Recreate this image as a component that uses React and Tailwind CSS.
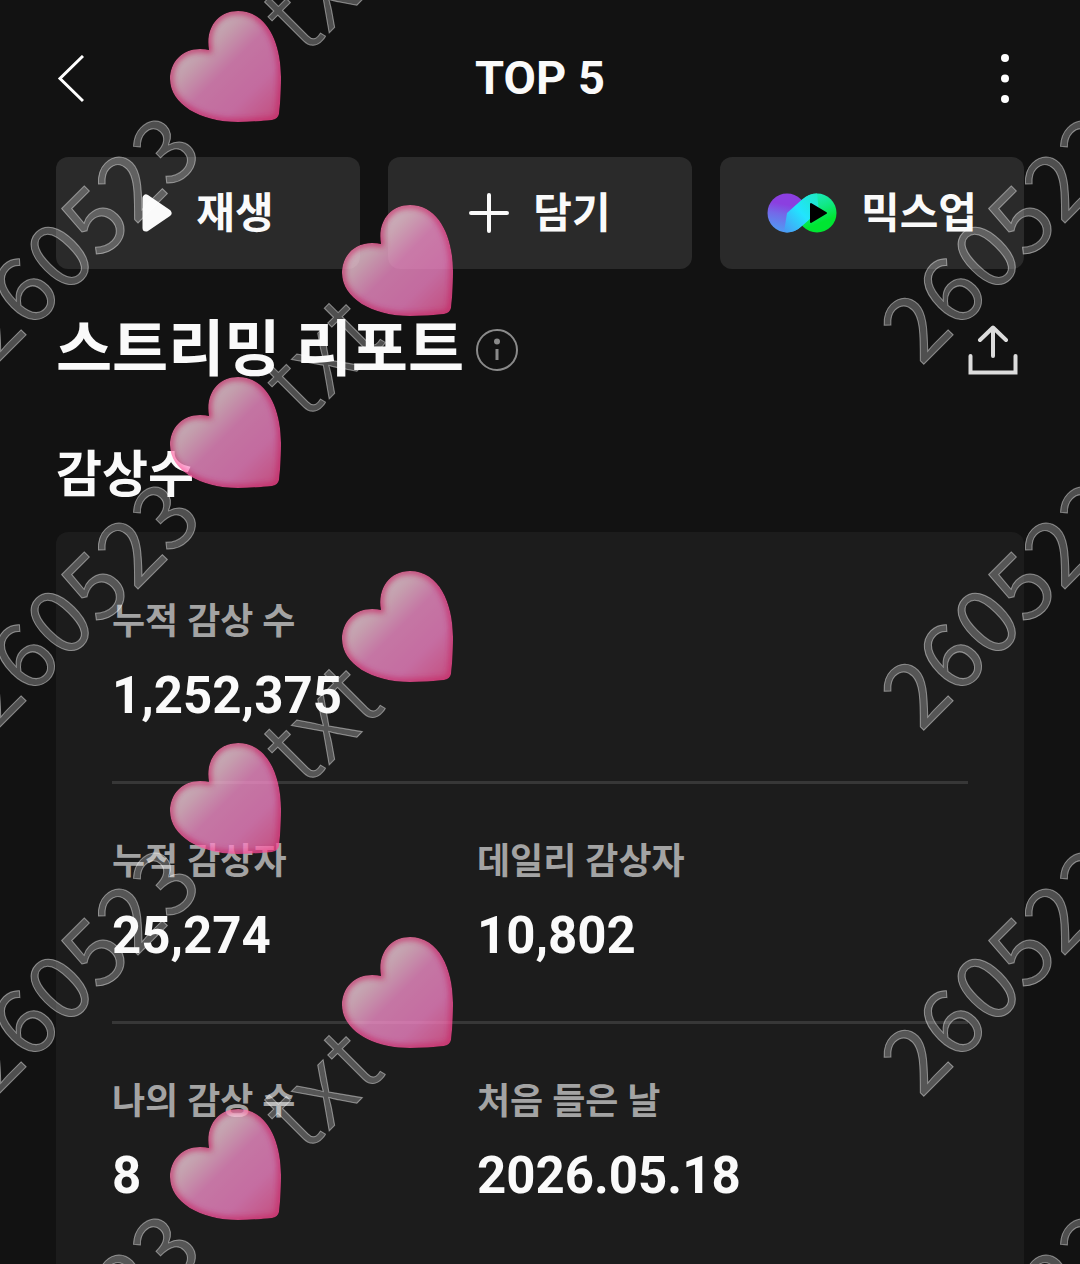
const stats = [
  [{ label: "누적 감상 수", value: "1,252,375" }],
  [
    { label: "누적 감상자", value: "25,274" },
    { label: "데일리 감상자", value: "10,802" },
  ],
  [
    { label: "나의 감상 수", value: "8" },
    { label: "처음 들은 날", value: "2026.05.18" },
  ],
];

const markRows = [0, 1, 2, 3];
const ROW_STEP = 366;

function BackIcon() {
  return (
    <svg width="28" height="48" viewBox="0 0 28 48" fill="none" aria-hidden="true">
      <path d="M27 1 4 23.500l23 22.500" stroke="#fff" strokeWidth="3" />
    </svg>
  );
}

function MoreIcon() {
  return (
    <svg width="8" height="50" viewBox="0 0 8 50" fill="#fff" aria-hidden="true">
      <circle cx="4" cy="4" r="4" />
      <circle cx="4" cy="24.500" r="4" />
      <circle cx="4" cy="45" r="4" />
    </svg>
  );
}

function PlayIcon() {
  return (
    <svg width="30" height="38" viewBox="0 0 30 38" aria-hidden="true">
      <path
        d="M4 4v30L26 19Z"
        fill="#fafafa"
        stroke="#fafafa"
        strokeWidth="7"
        strokeLinejoin="round"
      />
    </svg>
  );
}

function PlusIcon() {
  return (
    <svg width="40" height="40" viewBox="0 0 40 40" aria-hidden="true">
      <path d="M20 2v36M2 20h36" stroke="#fafafa" strokeWidth="4" strokeLinecap="round" />
    </svg>
  );
}

function MixIcon() {
  return (
    <svg width="70" height="40" viewBox="0 0 70 40" aria-hidden="true">
      <defs>
        <linearGradient id="mixLeft" x1="0.6" y1="0" x2="0.4" y2="1">
          <stop offset="0.3" stopColor="#8b3fe0" />
          <stop offset="0.55" stopColor="#7468e8" />
          <stop offset="1" stopColor="#4f9cf4" />
        </linearGradient>
        <linearGradient id="mixRight" x1="0.3" y1="0" x2="0.7" y2="1">
          <stop offset="0" stopColor="#1de9c6" />
          <stop offset="0.4" stopColor="#10e884" />
          <stop offset="0.75" stopColor="#00e632" />
        </linearGradient>
        <linearGradient id="mixBand" x1="0" y1="1" x2="1" y2="0">
          <stop offset="0" stopColor="#4b97f4" />
          <stop offset="0.5" stopColor="#22e4ff" />
          <stop offset="1" stopColor="#1de9c0" />
        </linearGradient>
      </defs>
      <circle cx="20" cy="20" r="19.5" fill="url(#mixLeft)" />
      <circle cx="50" cy="20" r="19.5" fill="url(#mixRight)" />
      <path
        d="M20 20 35 6.500Q41.500 .5 50 .5L52 18 35 33Q28 39.500 20 39.500L17 39Z"
        fill="url(#mixBand)"
      />
      <path d="M44 11v18l15-9Z" fill="#000" stroke="#000" strokeWidth="2" strokeLinejoin="round" />
    </svg>
  );
}

function InfoIcon() {
  return (
    <svg width="42" height="42" viewBox="0 0 42 42" fill="none" aria-hidden="true">
      <circle cx="21" cy="21" r="20" stroke="#8a8a8a" strokeWidth="2" />
      <circle cx="21" cy="12.500" r="3" fill="#8a8a8a" />
      <path d="M21 20v11" stroke="#8a8a8a" strokeWidth="3" />
    </svg>
  );
}

function ShareIcon() {
  return (
    <svg width="50" height="50" viewBox="0 0 50 50" fill="none" aria-hidden="true">
      <g stroke="#dcdcdc" strokeLinecap="round">
        <path d="M25 31V3M12 15 25 2.500l13 12.500" strokeWidth="4" strokeLinejoin="round" />
        <path d="M2.500 31v16.500h45V31" strokeWidth="4" />
      </g>
    </svg>
  );
}

function ActionButton({ icon, children }) {
  return (
    <button className="flex h-28 items-center justify-center gap-6 rounded-xl bg-[#2a2a2a] text-[42px] font-bold text-neutral-50">
      {icon}
      <span>{children}</span>
    </button>
  );
}

function Stat({ label, value }) {
  return (
    <div>
      <dt className="text-[36px] leading-[56px] font-bold text-[#a3a3a3]">{label}</dt>
      <dd className="mt-3.5 text-[51px] leading-[64px] font-bold text-neutral-50">{value}</dd>
    </div>
  );
}

const heartPath =
  "M39 39C35 17 48 0 68 0C97 0 111 32 111 66C111 83 110 95 109 103Q108 108 102 109C92 110 80 111 68 111C30 111 0 93 0 68C0 51 12 38 30 38Q36 38 39 39Z";

// repeated diagonal stamp laid over the whole screen
function Watermark() {
  return (
    <svg
      className="pointer-events-none absolute inset-0 h-full w-full"
      aria-hidden="true"
    >
      <defs>
        <linearGradient id="heartFill" x1="0.1" y1="0.1" x2="1" y2="1">
          <stop offset="0.2" stopColor="#fcdbe6" />
          <stop offset="0.29" stopColor="#fcc6dc" />
          <stop offset="0.46" stopColor="#fb94d0" />
          <stop offset="0.7" stopColor="#fb88cc" />
          <stop offset="1" stopColor="#fb5b9c" />
        </linearGradient>
        <clipPath id="heartClip">
          <path d={heartPath} />
        </clipPath>
        <filter id="rimBlur" x="-20%" y="-20%" width="140%" height="140%">
          <feGaussianBlur stdDeviation="3" />
        </filter>
        <g id="heart" opacity="0.76" clipPath="url(#heartClip)">
          <path d={heartPath} fill="url(#heartFill)" />
          <path d={heartPath} fill="none" stroke="#ff2f80" strokeWidth="5" filter="url(#rimBlur)" />
        </g>
      </defs>
      {markRows.map((row) => (
        <g key={row} transform={`translate(0 ${row * ROW_STEP})`}>
          <g
            fill="#fff"
            fillOpacity="0.26"
            stroke="#fff"
            strokeOpacity="0.42"
            strokeWidth="1"
          >
            <g fontFamily='"Noto Sans CJK KR", sans-serif' fontWeight="400" fontSize="90">
              <text transform="translate(-6 367) rotate(-45)">260523</text>
              <text transform="translate(921 367) rotate(-45)">260523</text>
            </g>
            <g fontFamily="Inter, sans-serif" fontWeight="300" fontSize="100">
              <text transform="translate(306 56) rotate(-45)">txt</text>
            </g>
          </g>
          <use href="#heart" x="170" y="11" />
          <use href="#heart" x="342" y="205" />
        </g>
      ))}
    </svg>
  );
}

export default function App() {
  return (
    <div className="relative flex min-h-screen flex-col overflow-hidden bg-[#121212] px-14 font-[Roboto,'Noto_Sans_CJK_KR',sans-serif] text-neutral-50">
      <header className="flex h-[157px] items-center justify-between">
        <button aria-label="뒤로" className="flex w-14 justify-start">
          <BackIcon />
        </button>
        <h1 className="text-[47px] font-bold">TOP 5</h1>
        <button aria-label="더보기" className="flex w-14 justify-end pr-[15px]">
          <MoreIcon />
        </button>
      </header>

      <div className="grid grid-cols-3 gap-7">
        <ActionButton icon={<PlayIcon />}>재생</ActionButton>
        <ActionButton icon={<PlusIcon />}>담기</ActionButton>
        <ActionButton icon={<MixIcon />}>믹스업</ActionButton>
      </div>

      <div className="mt-9 flex h-[90px] items-center justify-between">
        <div className="flex items-center gap-3">
          <h2 className="pt-0.5 text-[61px] font-bold">스트리밍 리포트</h2>
          <button aria-label="정보">
            <InfoIcon />
          </button>
        </div>
        <button aria-label="공유" className="pr-1.5">
          <ShareIcon />
        </button>
      </div>

      <h3 className="mt-11 mb-[21px] text-[50px] leading-[72px] font-bold">감상수</h3>

      <section className="flex-1 rounded-t-xl bg-[#1c1c1c] px-14 pt-3">
        {stats.map((row, i) => (
          <dl
            key={i}
            className="grid grid-cols-[365fr_491fr] border-b-[3px] border-[#373737] pt-[50px] pb-[53px] last:border-b-0"
          >
            {row.map((s) => (
              <Stat key={s.label} label={s.label} value={s.value} />
            ))}
          </dl>
        ))}
      </section>

      <Watermark />
    </div>
  );
}
